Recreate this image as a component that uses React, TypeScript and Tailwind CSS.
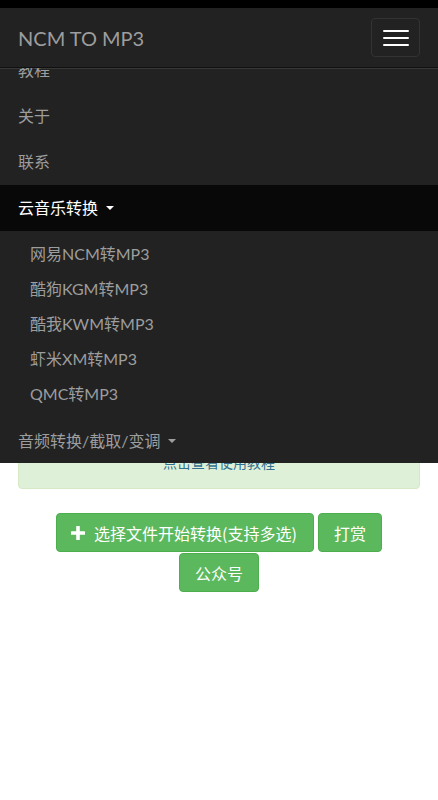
import React from 'react';

const navItems = ['教程', '关于', '联系'];
const dropdownItems = ['网易NCM转MP3', '酷狗KGM转MP3', '酷我KWM转MP3', '虾米XM转MP3', 'QMC转MP3'];

const Caret = ({ color }: { color: string }) => (
  <span className={`ml-2 inline-block h-0 w-0 border-x-[4px] border-t-[4px] border-x-transparent ${color}`} />
);

const PlusIcon = () => (
  <svg width="14" height="14" viewBox="0 0 14 14" className="mr-[9px]" fill="white">
    <rect x="5.2" y="0" width="3.6" height="14" rx="0.5" />
    <rect x="0" y="5.2" width="14" height="3.6" rx="0.5" />
  </svg>
);

export default function App() {
  return (
    <div className="relative min-h-[800px] bg-white font-['Lato','Noto_Sans_CJK_SC',sans-serif]">
      <div className="h-[8px] bg-black" />

      <header className="relative z-10 bg-[#222]">
        <div className="flex h-[59px] items-center justify-between px-[18px]">
          <span className="text-[20px] leading-none text-[#9d9d9d]">NCM TO MP3</span>
          <button className="flex h-[39px] w-[49px] flex-col items-center justify-center gap-[5px] rounded border border-[#333] bg-[#222]">
            <span className="block h-[2px] w-[26px] rounded-[1px] bg-white" />
            <span className="block h-[2px] w-[26px] rounded-[1px] bg-white" />
            <span className="block h-[2px] w-[26px] rounded-[1px] bg-white" />
          </button>
        </div>

        {/* expanded collapse, scrolled a little */}
        <nav className="absolute left-0 right-0 top-full h-[396px] overflow-hidden border-t border-[#101010] bg-[#222] shadow-[inset_0_1px_0_rgba(255,255,255,0.1)]">
          <ul className="-mt-[21px]">
            {navItems.map((item) => (
              <li key={item} className="flex h-[46px] items-center pl-[18px] text-[16px] text-[#9d9d9d]">
                {item}
              </li>
            ))}
            <li>
              <div className="flex h-[46px] items-center bg-[#080808] pl-[18px] text-[16px] text-white">
                云音乐转换
                <Caret color="border-t-white" />
              </div>
              <ul className="pb-[7px] pt-[5px]">
                {dropdownItems.map((item) => (
                  <li key={item} className="flex h-[35px] items-center pl-[30px] text-[16px] text-[#9d9d9d]">
                    {item}
                  </li>
                ))}
              </ul>
            </li>
            <li className="flex h-[46px] items-center pl-[18px] text-[16px] text-[#9d9d9d]">
              音频转换/截取/变调
              <Caret color="border-t-[#9d9d9d]" />
            </li>
          </ul>
        </nav>
      </header>

      <main className="px-[18px] pt-[370px]">
        <div className="rounded border border-[#d6e9c6] bg-[#dff0d8] p-[15px] text-center text-[14px] leading-[20px] text-[#31708f]">
          点击查看使用教程
        </div>

        <div className="mt-[24px] flex flex-col items-center gap-[1px] font-['Noto_Sans_CJK_SC',sans-serif]">
          <div className="flex gap-[4px]">
            <button className="flex h-[39px] items-center rounded border border-[#4cae4c] bg-[#5cb85c] pl-[14px] pr-[16px] text-[16px] text-white">
              <PlusIcon />
              选择文件开始转换(支持多选)
            </button>
            <button className="flex h-[39px] items-center rounded border border-[#4cae4c] bg-[#5cb85c] px-[15px] text-[16px] text-white">
              打赏
            </button>
          </div>
          <button className="flex h-[39px] items-center rounded border border-[#4cae4c] bg-[#5cb85c] px-[15px] text-[16px] text-white">
            公众号
          </button>
        </div>
      </main>
    </div>
  );
}
